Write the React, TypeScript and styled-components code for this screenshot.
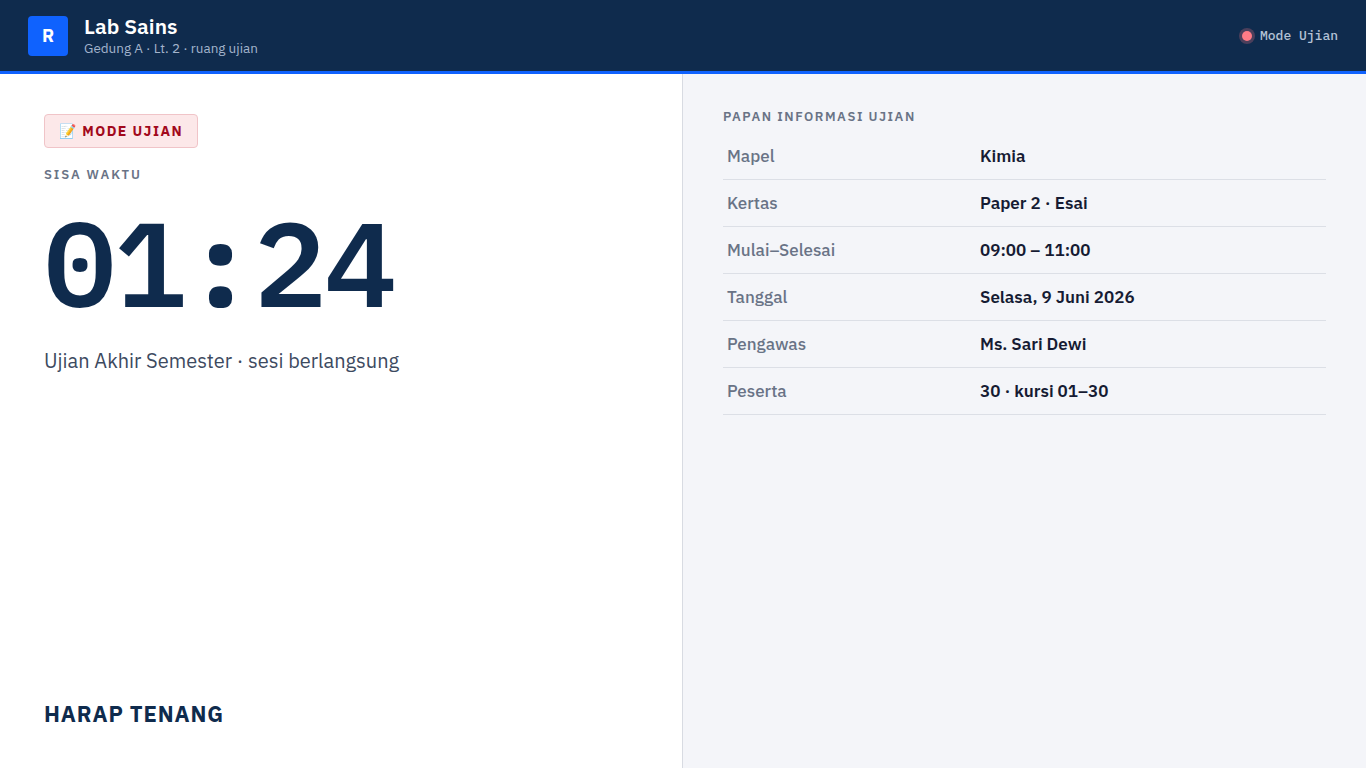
import React, { ReactElement } from 'react';
import styled, { createGlobalStyle } from 'styled-components';

const sans = '"IBM Plex Sans", "Noto Sans", sans-serif';
const mono = '"IBM Plex Mono", "Liberation Mono", monospace';

const infoRows = [
  { label: 'Mapel', value: 'Kimia' },
  { label: 'Kertas', value: 'Paper 2 · Esai' },
  { label: 'Mulai–Selesai', value: '09:00 – 11:00' },
  { label: 'Tanggal', value: 'Selasa, 9 Juni 2026' },
  { label: 'Pengawas', value: 'Ms. Sari Dewi' },
  { label: 'Peserta', value: '30 · kursi 01–30' },
];

const GlobalStyle = createGlobalStyle`
  html, body {
    margin: 0;
    padding: 0;
    height: 100%;
  }
  * {
    box-sizing: border-box;
  }
  body {
    font-family: ${ sans };
    background: #ffffff;
  }
`;

const Page = styled.div`
  display: flex;
  flex-direction: column;
  height: 768px;
  overflow: hidden;
`;
const TopBar = styled.header`
  align-items: center;
  background: #0f2b4d;
  border-bottom: 3px solid #0f62fe;
  display: flex;
  height: 74px;
  justify-content: space-between;
  padding: 0 28px;
`;
const Brand = styled.div`
  align-items: center;
  display: flex;
  gap: 16px;
`;
const Logo = styled.div`
  align-items: center;
  background: #0f62fe;
  border-radius: 4px;
  color: #ffffff;
  display: flex;
  font-size: 18px;
  font-weight: 700;
  height: 40px;
  justify-content: center;
  width: 40px;
`;
const BrandName = styled.div`
  color: #ffffff;
  font-size: 21px;
  font-weight: 600;
  line-height: 25px;
`;
const BrandSub = styled.div`
  color: #a3b4cc;
  font-size: 13.5px;
  line-height: 17px;
  margin-top: 1px;
`;
const Status = styled.div`
  align-items: center;
  color: #b4c2d6;
  display: flex;
  font-family: ${ mono };
  font-size: 13px;
  font-weight: 500;
  gap: 8px;
`;
const StatusDot = styled.span`
  background: #ff7b86;
  border-radius: 50%;
  box-shadow: 0 0 0 3px rgba(255, 123, 134, 0.25);
  height: 10px;
  width: 10px;
`;
const Columns = styled.main`
  display: grid;
  flex: 1;
  grid-template-columns: 1fr 1fr;
  min-height: 0;
`;
const LeftPanel = styled.section`
  border-right: 1px solid #d8dbe2;
  display: flex;
  flex-direction: column;
  padding: 40px 44px;
`;
const ModeBadge = styled.div`
  align-self: flex-start;
  background: #fce8e9;
  border: 1px solid #f0c4c8;
  border-radius: 4px;
  color: #a2091c;
  font-size: 14px;
  font-weight: 700;
  letter-spacing: 0.105em;
  line-height: 18px;
  padding: 7px 14px;
`;
const SectionLabel = styled.div`
  color: #697386;
  font-size: 13px;
  font-weight: 600;
  letter-spacing: 0.12em;
  line-height: 17px;
`;
const TimerLabel = styled(SectionLabel)`
  letter-spacing: 0.145em;
  margin-top: 18px;
`;
const Timer = styled.div`
  color: #0f2b4d;
  font-family: ${ mono };
  font-size: 120px;
  font-weight: 600;
  letter-spacing: -0.015em;
  line-height: 1;
  margin-top: 19px;
`;
const TimerNote = styled.div`
  color: #3d4a5f;
  font-size: 20px;
  line-height: 26px;
  margin-top: 26px;
`;
const Notice = styled.div`
  color: #0f2b4d;
  font-size: 22px;
  font-weight: 700;
  letter-spacing: 0.04em;
  line-height: 28px;
  margin-top: auto;
`;
const RightPanel = styled.section`
  background: #f4f5f9;
  padding: 34px 40px;
`;
const InfoTable = styled.div`
  margin-top: 8px;
`;
const InfoRow = styled.div`
  align-items: center;
  border-bottom: 1px solid #dcdfe6;
  display: grid;
  font-size: 17px;
  grid-template-columns: 253px 1fr;
  height: 47px;
  padding: 0 4px;
`;
const InfoLabel = styled.div`
  color: #697386;
  font-weight: 500;
`;
const InfoValue = styled.div`
  color: #161b33;
  font-weight: 600;
`;

export default function App(): ReactElement {
  return (
    <Page>
      <GlobalStyle />
      <TopBar>
        <Brand>
          <Logo>R</Logo>
          <div>
            <BrandName>Lab Sains</BrandName>
            <BrandSub>Gedung A · Lt. 2 · ruang ujian</BrandSub>
          </div>
        </Brand>
        <Status>
          <StatusDot />
          Mode Ujian
        </Status>
      </TopBar>
      <Columns>
        <LeftPanel>
          <ModeBadge>📝 MODE UJIAN</ModeBadge>
          <TimerLabel>SISA WAKTU</TimerLabel>
          <Timer>01:24</Timer>
          <TimerNote>Ujian Akhir Semester · sesi berlangsung</TimerNote>
          <Notice>HARAP TENANG</Notice>
        </LeftPanel>
        <RightPanel>
          <SectionLabel>PAPAN INFORMASI UJIAN</SectionLabel>
          <InfoTable>
            { infoRows.map(r => (
              <InfoRow key={ r.label }>
                <InfoLabel>{ r.label }</InfoLabel>
                <InfoValue>{ r.value }</InfoValue>
              </InfoRow>
            )) }
          </InfoTable>
        </RightPanel>
      </Columns>
    </Page>
  );
}
